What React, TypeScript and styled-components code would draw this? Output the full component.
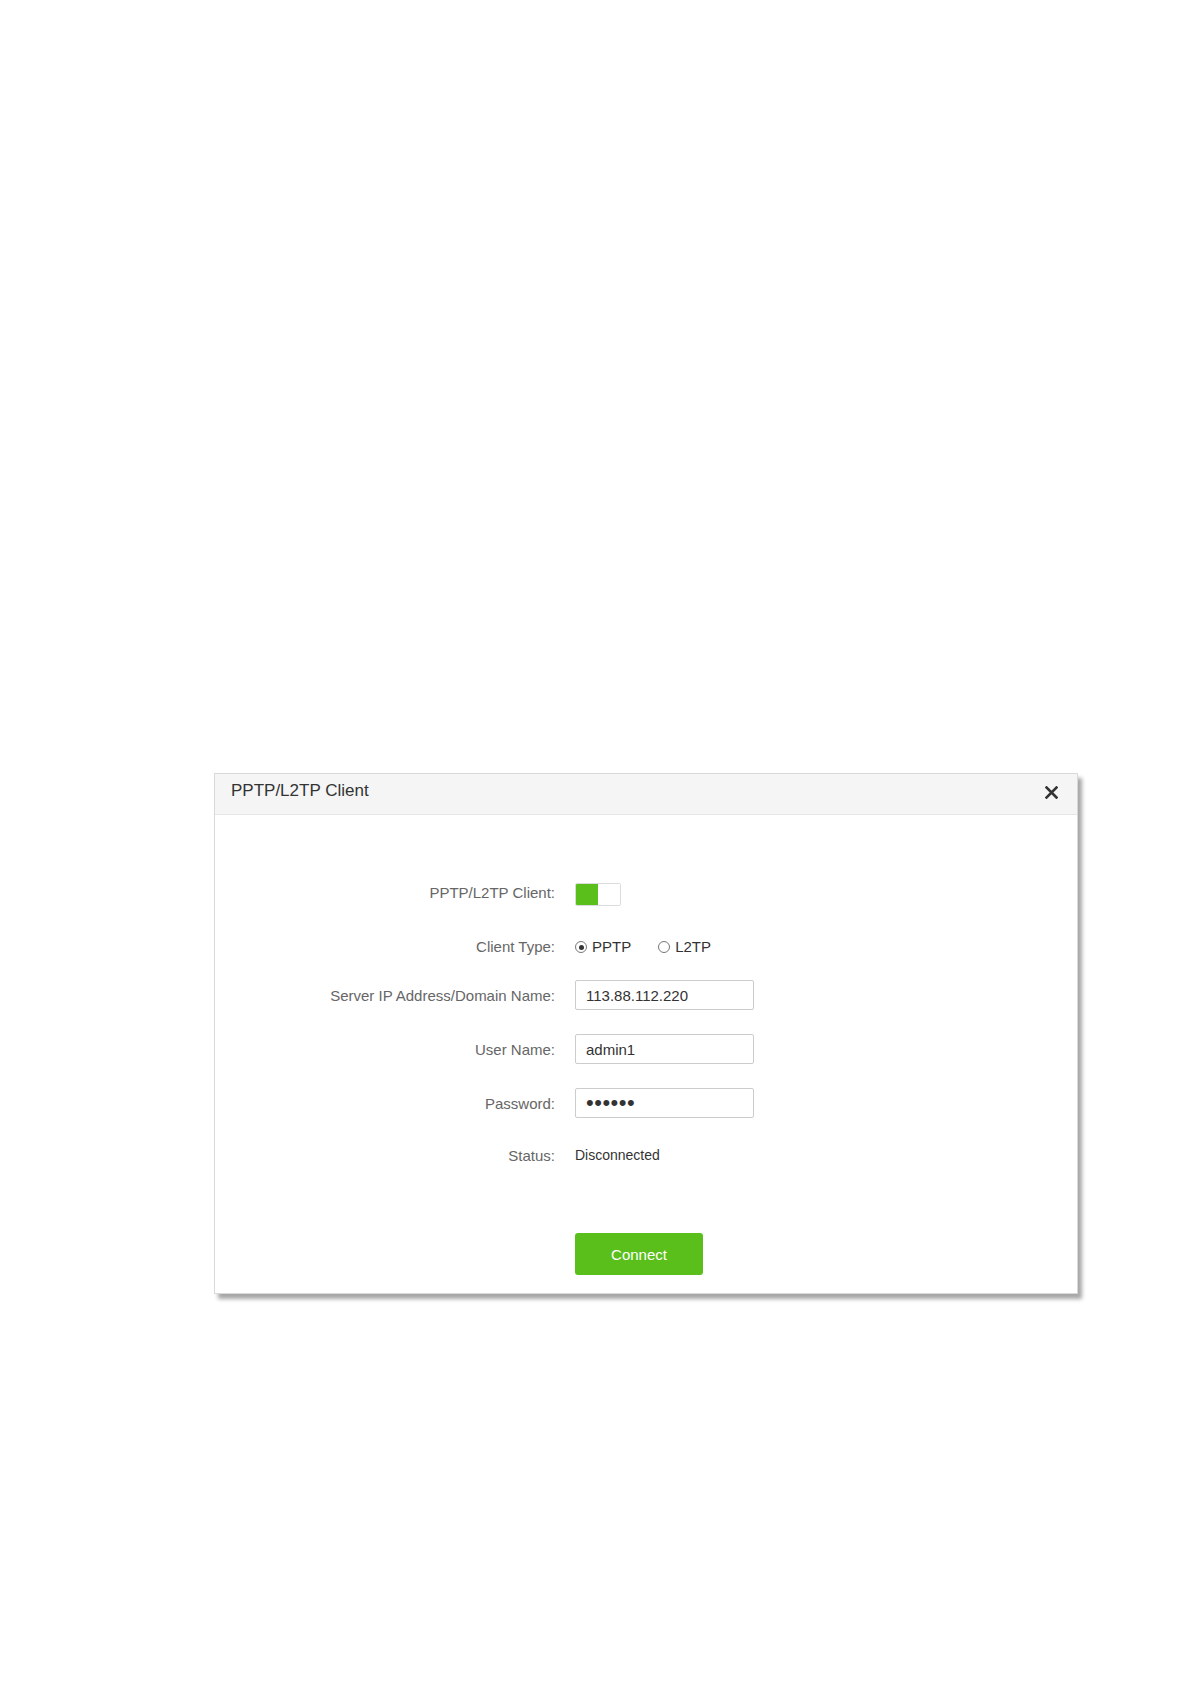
import { useState } from 'react';
import styled, { createGlobalStyle } from 'styled-components';

const GlobalStyle = createGlobalStyle`
  body {
    margin: 0;
    background: #ffffff;
    font-family: 'Liberation Sans', Arial, sans-serif;
  }
`;

const CloseIcon: React.FC = () => (
  <svg width='13' height='13' viewBox='0 0 13 13'>
    <path d='M1.5 1.5 L11.5 11.5 M11.5 1.5 L1.5 11.5' stroke='#333' strokeWidth='2.6' strokeLinecap='square' />
  </svg>
);

const App: React.FC = () => {
  const [enabled, setEnabled] = useState<boolean>(true);
  const [clientType, setClientType] = useState<string>('pptp');
  const [server, setServer] = useState<string>('113.88.112.220');
  const [user, setUser] = useState<string>('admin1');
  const [password, setPassword] = useState<string>('123456');

  return (
    <Page>
      <GlobalStyle />
      <Dialog>
        <Header>
          <Title>PPTP/L2TP Client</Title>
          <CloseButton type='button'>
            <CloseIcon />
          </CloseButton>
        </Header>
        <Body>
          <Row>
            <Label>PPTP/L2TP Client:</Label>
            <Toggle type='button' onClick={() => setEnabled(!enabled)}>
              <ToggleHalf $on={enabled} />
              <ToggleHalf $on={!enabled} $off />
            </Toggle>
          </Row>
          <Row $space={24}>
            <Label>Client Type:</Label>
            <RadioGroup>
              <RadioOption onClick={() => setClientType('pptp')}>
                <RadioDot $checked={clientType === 'pptp'} />
                PPTP
              </RadioOption>
              <RadioOption onClick={() => setClientType('l2tp')}>
                <RadioDot $checked={clientType === 'l2tp'} />
                L2TP
              </RadioOption>
            </RadioGroup>
          </Row>
          <Row $space={19}>
            <Label>Server IP Address/Domain Name:</Label>
            <TextInput value={server} onChange={(e) => setServer(e.target.value)} />
          </Row>
          <Row $space={24}>
            <Label>User Name:</Label>
            <TextInput value={user} onChange={(e) => setUser(e.target.value)} />
          </Row>
          <Row $space={24}>
            <Label>Password:</Label>
            <TextInput
              type='password'
              $secret
              value={password}
              onChange={(e) => setPassword(e.target.value)}
            />
          </Row>
          <Row $space={22}>
            <Label>Status:</Label>
            <StatusText>Disconnected</StatusText>
          </Row>
          <Row $space={63}>
            <Label />
            <ConnectButton type='button'>Connect</ConnectButton>
          </Row>
        </Body>
      </Dialog>
    </Page>
  );
};

export default App;

const Page = styled.div`
  width: 1191px;
  height: 1684px;
  box-sizing: border-box;
  padding: 773px 0 0 214px;
`;

const Dialog = styled.div`
  width: 864px;
  box-sizing: border-box;
  border: 1px solid #d9d9d9;
  background: #ffffff;
  box-shadow: 4px 5px 4px rgba(0, 0, 0, 0.35);
`;

const Header = styled.div`
  display: flex;
  align-items: center;
  justify-content: space-between;
  height: 40px;
  padding: 0 19px 0 16px;
  background: #f5f5f5;
  border-bottom: 1px solid #e6e6e6;
`;

const Title = styled.div`
  font-size: 17px;
  color: #333333;
  margin-top: -6px;
`;

const CloseButton = styled.button`
  display: flex;
  border: none;
  background: none;
  padding: 0;
  margin-top: -4px;
  cursor: pointer;
`;

const Body = styled.div`
  padding: 62px 0 18px;
`;

const Row = styled.div<{ $space?: number }>`
  display: flex;
  align-items: center;
  gap: 20px;
  min-height: 30px;
  margin-top: ${(p) => p.$space ?? 0}px;
`;

const Label = styled.div`
  width: 340px;
  flex-shrink: 0;
  text-align: right;
  font-size: 15px;
  color: #666666;
`;

const Toggle = styled.button`
  display: flex;
  width: 46px;
  height: 23px;
  padding: 0;
  margin-top: 4px;
  border: 1px solid #dcdcdc;
  border-radius: 2px;
  background: #ffffff;
  overflow: hidden;
  cursor: pointer;
`;

const ToggleHalf = styled.span<{ $on: boolean; $off?: boolean }>`
  flex: 1;
  background: ${(p) => (p.$on && !p.$off ? '#5abf1a' : '#ffffff')};
`;

const RadioGroup = styled.div`
  display: flex;
  align-items: center;
  gap: 27px;
  font-size: 15px;
  color: #333333;
`;

const RadioOption = styled.label`
  display: flex;
  align-items: center;
  gap: 5px;
  cursor: pointer;
`;

const RadioDot = styled.span<{ $checked: boolean }>`
  position: relative;
  width: 12px;
  height: 12px;
  margin-top: 2px;
  border: 1px solid #777777;
  border-radius: 50%;
  box-sizing: border-box;

  &::after {
    content: '';
    display: ${(p) => (p.$checked ? 'block' : 'none')};
    position: absolute;
    left: 2.5px;
    top: 2.5px;
    width: 5px;
    height: 5px;
    border-radius: 50%;
    background: #333333;
  }
`;

const TextInput = styled.input<{ $secret?: boolean }>`
  width: 179px;
  height: 30px;
  box-sizing: border-box;
  padding: 0 10px;
  border: 1px solid #cccccc;
  border-radius: 2px;
  font-family: 'Liberation Sans', Arial, sans-serif;
  font-size: ${(p) => (p.$secret ? '22px' : '15px')};
  letter-spacing: ${(p) => (p.$secret ? '0.5px' : 'normal')};
  color: #333333;
  outline: none;
`;

const StatusText = styled.div`
  font-size: 14px;
  color: #333333;
`;

const ConnectButton = styled.button`
  width: 128px;
  height: 42px;
  border: none;
  border-radius: 3px;
  background: #5abf1a;
  color: #ffffff;
  font-family: 'Liberation Sans', Arial, sans-serif;
  font-size: 15px;
  cursor: pointer;
`;
